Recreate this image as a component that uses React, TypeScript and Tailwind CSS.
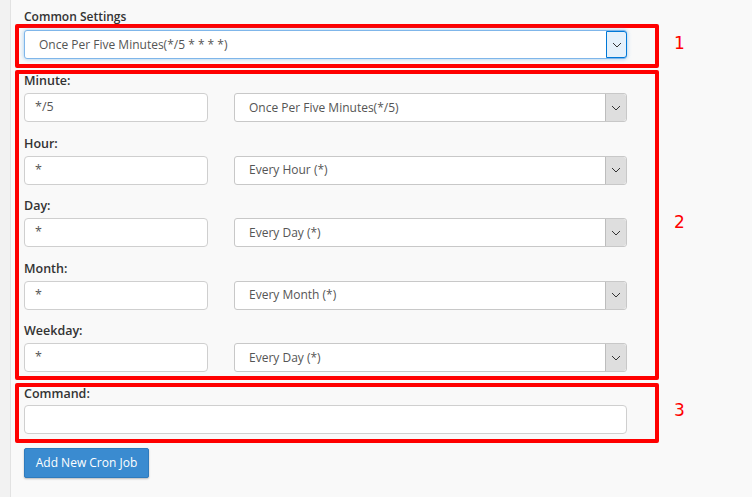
import React from "react";

const font = { fontFamily: '"Open Sans", "Liberation Sans", sans-serif' };

const Chevron = () => (
	<svg width="10" height="6" viewBox="0 0 10 6" fill="none">
		<path d="M1 1l4 4 4-4" stroke="#333" strokeWidth="1" />
	</svg>
);

const Select: React.FC<{ value: string; active?: boolean }> = ({ value, active }) => (
	<div
		className={
			active
				? "flex h-[29px] items-center rounded-[3px] border border-[#7fb6ea] bg-white shadow-[0_0_4px_rgba(102,175,233,0.6)]"
				: "flex h-[29px] items-center rounded-[3px] border border-[#c8c8c8] bg-white"
		}
	>
		<span className="flex-1 pl-[14px] text-[12px] text-[#555]">{value}</span>
		<div
			className={
				active
					? "flex h-full w-[21px] items-center justify-center rounded-r-[3px] border border-[#0078d7] bg-[#e5f1fb] -mr-px"
					: "flex h-full w-[21px] items-center justify-center rounded-r-[3px] border-l border-[#bdbdbd] bg-[#dedede]"
			}
		>
			<Chevron />
		</div>
	</div>
);

const Input: React.FC<{ value?: string; className?: string }> = ({ value, className }) => (
	<div
		className={
			"flex h-[29px] items-center rounded-[4px] border border-[#cfcfcf] bg-white pl-[10px] text-[12.5px] text-[#555] " +
			(className ?? "")
		}
	>
		{value}
	</div>
);

const rows = [
	{ label: "Minute:", value: "*/5", option: "Once Per Five Minutes(*/5)" },
	{ label: "Hour:", value: "*", option: "Every Hour (*)" },
	{ label: "Day:", value: "*", option: "Every Day (*)" },
	{ label: "Month:", value: "*", option: "Every Month (*)" },
	{ label: "Weekday:", value: "*", option: "Every Day (*)" },
];

const Marker: React.FC<{ n: string }> = ({ n }) => (
	<span
		className="ml-[15px] -mt-[4px] text-[17px] text-[#ff0000]"
		style={{ fontFamily: '"DejaVu Sans", sans-serif' }}
	>
		{n}
	</span>
);

export default function App() {
	return (
		<div className="flex min-h-[497px] w-[752px] bg-[#f9f9f9] text-[#333]" style={font}>
			<div className="w-[11px] shrink-0 border-r border-[#e2e2e2] bg-[#f2f2f2]" />
			<div className="flex flex-col pl-[4px] pt-[9px]">
				<div className="pl-[9px] text-[12px] font-semibold leading-[15px]">Common Settings</div>

				{/* 1 */}
				<div className="flex items-center">
					<div className="w-[644px] rounded-[2px] border-4 border-[#ff0000] pt-[2px] pb-[5px] pl-[5px] pr-[28px]">
						<Select value="Once Per Five Minutes(*/5 * * * *)" active />
					</div>
					<Marker n="1" />
				</div>

				{/* 2 */}
				<div className="mt-[2px] flex items-center">
					<div className="flex w-[644px] flex-col gap-[14.5px] rounded-[2px] border-4 border-[#ff0000] pb-[4px] pl-[5px] pr-[28px]">
						{rows.map((r) => (
							<div key={r.label} className="flex flex-col">
								<div className="text-[12.5px] font-semibold leading-[14px]">{r.label}</div>
								<div className="mt-[5px] flex gap-[26px]">
									<Input value={r.value} className="w-[184px]" />
									<div className="flex-1">
										<Select value={r.option} />
									</div>
								</div>
							</div>
						))}
					</div>
					<Marker n="2" />
				</div>

				{/* 3 */}
				<div className="mt-[3px] flex items-center">
					<div className="flex w-[644px] flex-col rounded-[2px] border-4 border-[#ff0000] pb-[5px] pl-[5px] pr-[28px]">
						<div className="text-[12.5px] font-semibold leading-[14px]">Command:</div>
						<Input className="mt-[4px] h-[29px]" />
					</div>
					<Marker n="3" />
				</div>

				<div className="pl-[9px] pt-[5px]">
					<button className="h-[30px] w-[125px] rounded-[2px] border border-[#2f7bbd] bg-[#3a8bd0] text-[12px] text-white shadow-[0_1px_2px_rgba(0,0,0,0.25)]">
						Add New Cron Job
					</button>
				</div>
			</div>
		</div>
	);
}
